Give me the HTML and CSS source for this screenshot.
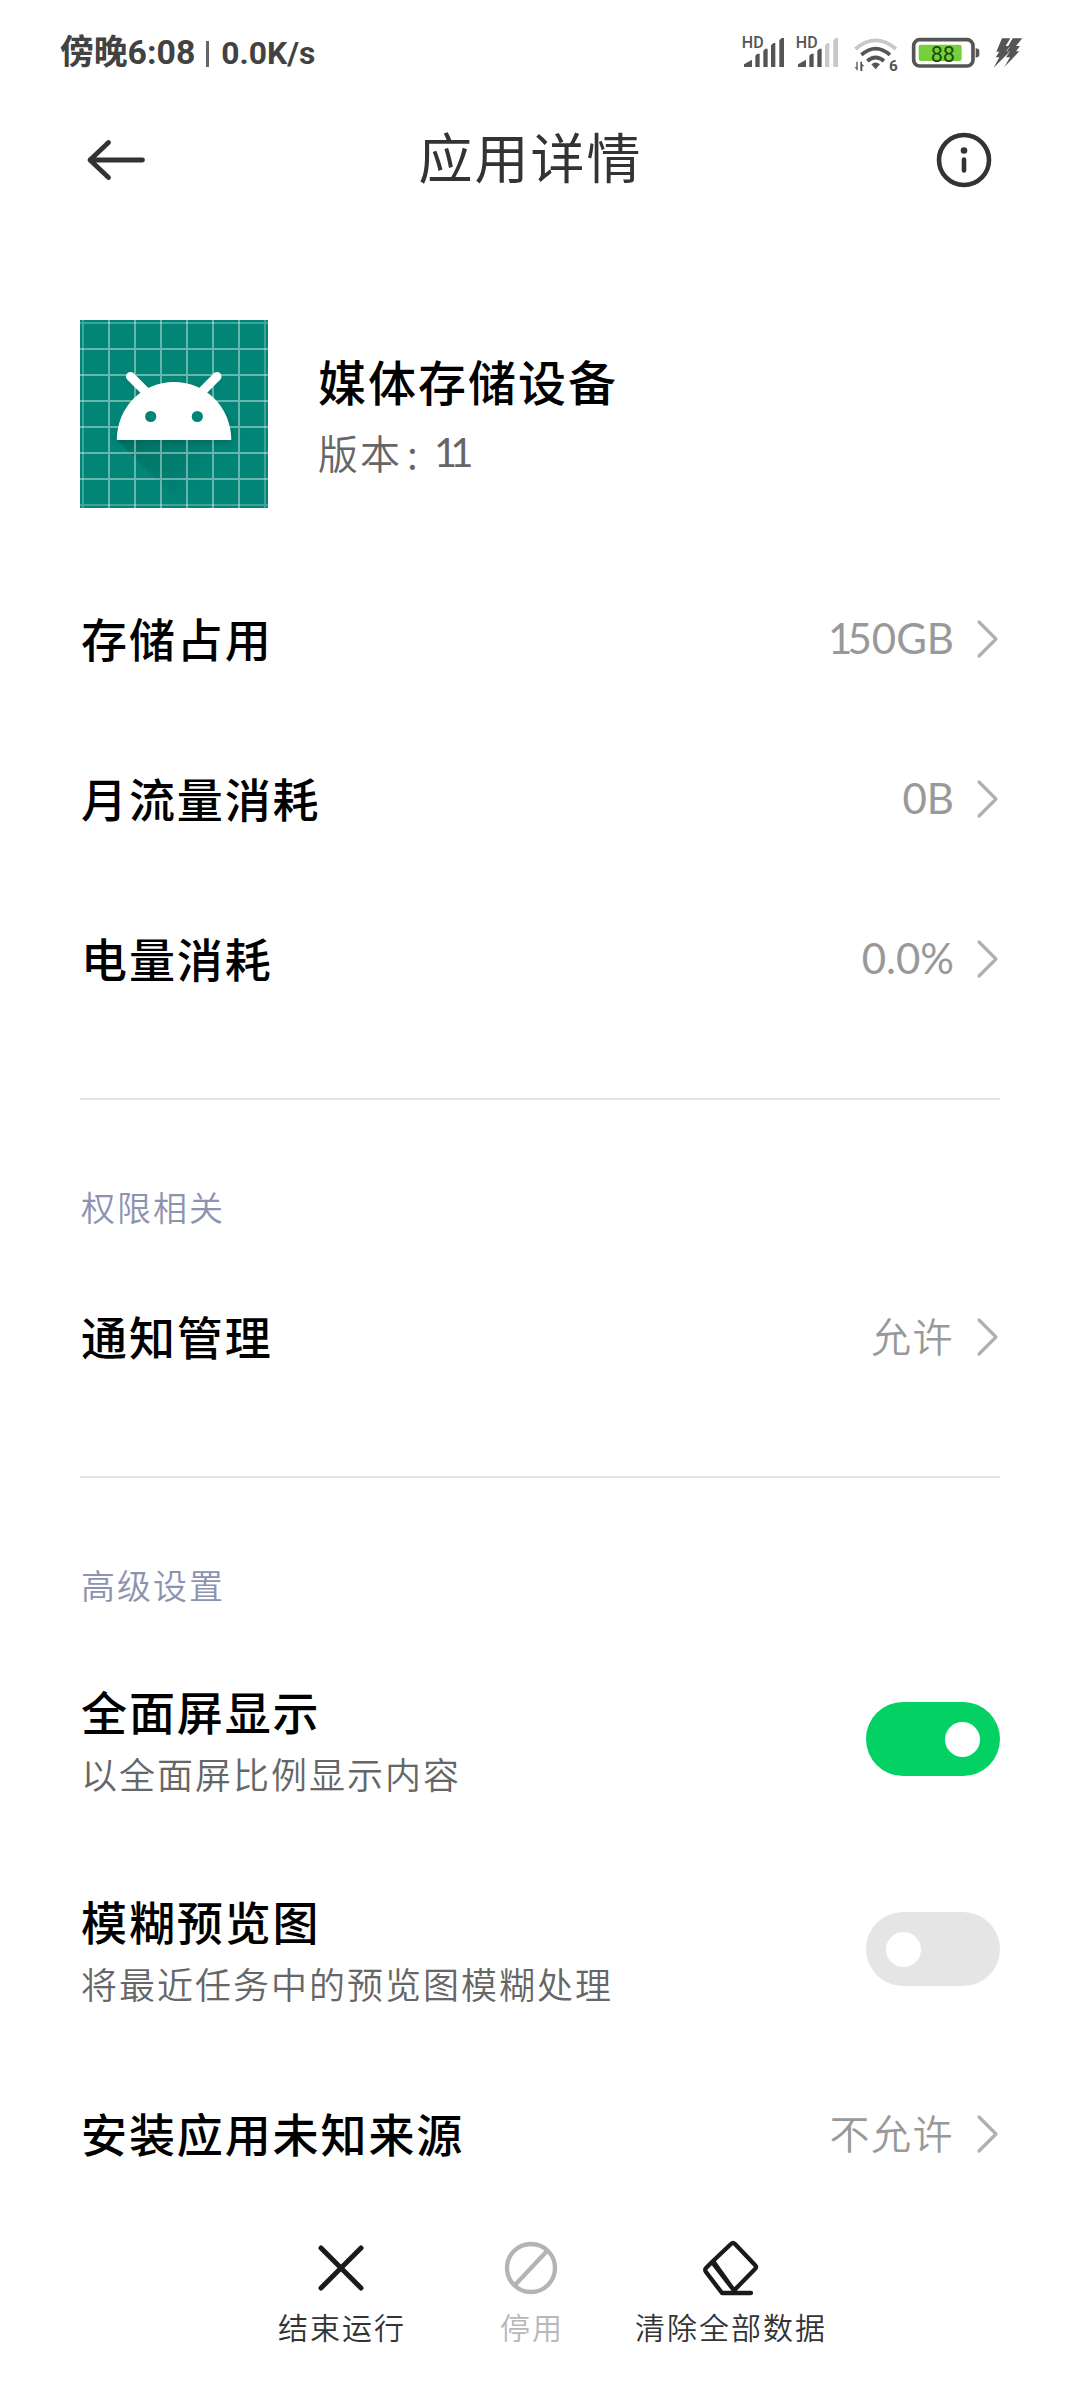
FILE: index.html
```html
<!DOCTYPE html>
<html lang="zh-CN">
<head>
<meta charset="utf-8">
<title>应用详情</title>
<link rel="stylesheet" href="styles.css">
</head>
<body>
<div class="screen">
  <div class="status">
    <div class="status-text"><span class="clock">傍晚6:08</span><span class="bar"></span><span class="speed">0.0K/s</span></div>
    <div class="status-icons">
      <svg class="signal" viewBox="66 42 128 100">
        <text x="65" y="81" class="hd">HD</text>
        <path d="M72 138v-8l24-14v22zM106 138v-34l6-6h7v40zM130 138V89l6-6h7v55zM153 138V73l7-7h6v72zM178 138V58l7-7h7v87z"/>
      </svg>
      <svg class="signal" viewBox="66 42 128 100">
        <text x="65" y="81" class="hd">HD</text>
        <path d="M72 138v-8l24-14v22zM106 138v-34l6-6h7v40zM130 138V89l6-6h7v55z"/>
        <path class="dim" d="M153 138V73l7-7h6v72zM178 138V58l7-7h7v87z"/>
      </svg>
      <svg class="wifi" viewBox="400 42 140 124">
        <path class="arc dim-arc" d="M404 84q61-52 122 0"/>
        <path class="arc" d="M422 102q43-38 86 0M440 120q25-21 50 0"/>
        <path d="M452 130q13-11 26 0l-13 15z"/>
        <path d="M411 122v28l-9-11h5v-17zM419 150v-28l5 0v6l7 8h-6v14z"/>
        <text x="505" y="150" class="gen">6</text>
      </svg>
      <svg class="battery" viewBox="574 42 208 104">
        <rect class="shell" x="582" y="56" width="178" height="79" rx="18"/>
        <rect class="charge" x="597" y="71" width="129" height="49" rx="7"/>
        <path d="M768 82q11 1 11 8v12q0 7-11 8z"/>
        <text x="633" y="122" class="pct">88</text>
      </svg>
      <svg class="bolt" viewBox="818 42 90 104">
        <path d="M845 52h25l-14 23h13l-11 16h11l-49 49 17-31h-11l11-17h-9z"/>
        <path d="M877 52h29l-19 23h12l-12 16h10l-45 47 17-29h-12l12-18h-9l8-13h-6z"/>
      </svg>
    </div>
  </div>

  <header class="appbar">
    <svg class="back" viewBox="0 0 60 44"><path d="M56.500 22H4M22.500 4.500L4 22l18.500 17.500"/></svg>
    <h1>应用详情</h1>
    <svg class="info" viewBox="0 0 56 56"><circle cx="28" cy="28" r="25"/><circle class="dot" cx="28" cy="18.500" r="3.300"/><path d="M28 27.500v11"/></svg>
  </header>

  <section class="app">
    <svg class="app-icon" viewBox="0 0 188 188">
      <defs>
        <linearGradient id="cast" x1="60" y1="110" x2="120" y2="170" gradientUnits="userSpaceOnUse">
          <stop offset="0" stop-color="#003d34" stop-opacity=".25"/>
          <stop offset="1" stop-color="#003d34" stop-opacity="0"/>
        </linearGradient>
        <filter id="soft" x="-20%" y="-20%" width="140%" height="140%"><feGaussianBlur stdDeviation="3"/></filter>
      </defs>
      <rect width="188" height="188" fill="#008577"/>
      <path class="cast" d="M37 120L105 188h83v-54L137 84z"/>
      <path class="shade" d="M38 122a57 57 0 0 1 112 0zM48 58l14 16 6-4zM139 58l-14 16-6-4z"/>
      <path class="grid" d="M29 0v188M55 0v188M81 0v188M107 0v188M133 0v188M159 0v188M0 29h188M0 55h188M0 81h188M0 107h188M0 133h188M0 159h188"/>
      <path class="grid edge" d="M3 0v188M185 0v188M0 3h188M0 185h188"/>
      <path class="antenna" d="M50.500 56.500L66 72M137 56.500L121.500 72"/>
      <path class="head" d="M36.800 120C37 87 62 62 94 62s57 25 57.300 58z"/>
      <circle class="eye" cx="70.700" cy="96.500" r="5.600"/><circle class="eye" cx="117.300" cy="96.500" r="5.600"/>
    </svg>
    <div class="app-text">
      <div class="app-name">媒体存储设备</div>
      <div class="app-version"><span>版本</span><span class="colon">:</span><span class="num">11</span></div>
    </div>
  </section>

  <section class="group usage">
    <div class="row"><span class="label">存储占用</span><span class="value num"><span class="one">1</span>50GB</span><svg class="chevron" viewBox="0 0 24 40"><path d="M3 3l17 17L3 37"/></svg></div>
    <div class="row"><span class="label">月流量消耗</span><span class="value num">0B</span><svg class="chevron" viewBox="0 0 24 40"><path d="M3 3l17 17L3 37"/></svg></div>
    <div class="row"><span class="label">电量消耗</span><span class="value num">0.0%</span><svg class="chevron" viewBox="0 0 24 40"><path d="M3 3l17 17L3 37"/></svg></div>
  </section>

  <section class="group perms">
    <h2>权限相关</h2>
    <div class="row"><span class="label">通知管理</span><span class="value">允许</span><svg class="chevron" viewBox="0 0 24 40"><path d="M3 3l17 17L3 37"/></svg></div>
  </section>

  <section class="group advanced">
    <h2>高级设置</h2>
    <div class="row tall">
      <div class="stack"><span class="label">全面屏显示</span><span class="sub">以全面屏比例显示内容</span></div>
      <div class="toggle on"><span class="knob"></span></div>
    </div>
    <div class="row tall">
      <div class="stack"><span class="label">模糊预览图</span><span class="sub">将最近任务中的预览图模糊处理</span></div>
      <div class="toggle"><span class="knob"></span></div>
    </div>
    <div class="row"><span class="label">安装应用未知来源</span><span class="value">不允许</span><svg class="chevron" viewBox="0 0 24 40"><path d="M3 3l17 17L3 37"/></svg></div>
  </section>

  <footer class="actions">
    <div class="action"><svg viewBox="0 0 60 60"><path d="M10 10l40 40M50 10L10 50"/></svg><span>结束运行</span></div>
    <div class="action disabled"><svg viewBox="0 0 60 60"><circle cx="30" cy="30" r="24"/><path class="slash" d="M14 47L46 13"/></svg><span>停用</span></div>
    <div class="action clear"><svg viewBox="0 0 60 60"><path class="thin" d="M31 6q2-2 4 0l20 21q2 2 0 4L34 52.500 13 23zM12 24L34 52.500M12 24l-6 6q-1.500 1.500 0 4l16 21h29"/></svg><span>清除全部数据</span></div>
  </footer>
</div>
</body>
</html>
```
FILE: styles.css
```css
* { box-sizing: border-box; }
body {
  margin: 0;
  background: #fff;
  color: #000;
  font-family: "Noto Sans CJK SC", sans-serif;
}
svg { display: block; flex: none; }
h1, h2 { margin: 0; }
.screen {
  width: 1080px;
  height: 2400px;
  display: flex;
  flex-direction: column;
  overflow: hidden;
}

.status {
  height: 104px;
  padding: 0 57px 0 60px;
  display: flex;
  align-items: center;
  justify-content: space-between;
  color: #424242;
  font-family: Roboto, "Noto Sans CJK SC", sans-serif;
}
.status-text { display: flex; align-items: center; font-size: 33.800px; font-weight: 700; line-height: 40px; }
.clock { padding-top: 1px; }
.bar { width: 3px; height: 26px; margin: 4px 12px 0 11px; background: #666; }
.speed { font-size: 31.800px; padding-top: 2px; }
.status-icons { display: flex; align-items: center; fill: #555; }
.signal { width: 42.670px; height: 33.330px; margin-right: 11.330px; }
.wifi { width: 46.670px; height: 41.330px; margin: 8px 10.330px 0 3.330px; }
.battery { width: 69.330px; height: 34.670px; margin-right: 13px; }
.bolt { width: 30px; height: 34.670px; }
.hd { font: 500 48px Roboto, sans-serif; letter-spacing: 1px; }
.gen { font: 700 46px Roboto, sans-serif; }
.pct { font: 400 65px Roboto, sans-serif; fill: #1d4a08; }
.dim { fill: #c8c8c8; }
.arc { fill: none; stroke: #555; stroke-width: 11; }
.dim-arc { stroke: #c8c8c8; }
.shell { fill: none; stroke: #555; stroke-width: 11; }
.charge { fill: #76d03c; }

.appbar {
  height: 112px;
  padding: 0 88px 0 86px;
  display: flex;
  align-items: center;
  justify-content: space-between;
  color: #333;
}
.appbar h1 { margin-right: 21px; padding-bottom: 9px; font-size: 54px; font-weight: 400; line-height: 80px; letter-spacing: 2px; }
.back { width: 60px; height: 44px; fill: none; stroke: #333; stroke-width: 4.800; stroke-linecap: round; stroke-linejoin: round; }
.info { width: 56px; height: 56px; fill: none; stroke: #333; stroke-width: 4.600; stroke-linecap: round; }
.info .dot { fill: #333; stroke: none; }

.app { margin-top: 104px; padding: 0 80px; display: flex; align-items: center; gap: 50px; }
.app-icon { width: 188px; height: 188px; }
.cast { fill: url(#cast); }
.grid { stroke: #fff; stroke-opacity: .4; stroke-width: 2; fill: none; }
.edge { stroke-opacity: .25; }
.shade { fill: #003d34; opacity: .35; filter: url(#soft); }
.antenna { stroke: #fff; stroke-width: 9; stroke-linecap: round; fill: none; }
.head { fill: #fff; }
.eye { fill: #008577; }
.app-text { display: flex; flex-direction: column; padding-top: 4px; }
.app-name { font-size: 48px; font-weight: 500; line-height: 71px; letter-spacing: 2px; }
.app-version { display: flex; font-size: 40px; font-weight: 350; line-height: 72px; letter-spacing: 2px; color: #666; }
.colon { width: 32px; padding-left: 5px; }

.group { margin: 0 80px; }
.usage { margin-top: 51px; border-bottom: 2px solid #e4e4e4; height: 541px; }
.perms { height: 378px; padding-top: 62px; border-bottom: 2px solid #e4e4e4; }
.advanced { padding-top: 62px; }
h2 { padding-left: 1px; font-size: 34px; font-weight: 350; line-height: 90px; letter-spacing: 2px; color: #8c93b0; }
.row { height: 160px; padding-left: 1px; display: flex; align-items: center; }
.perms .row { margin-top: 5px; }
.advanced h2 { margin-bottom: 4px; }
.label { padding-bottom: 5px; font-size: 46px; font-weight: 500; line-height: 66px; letter-spacing: 1.900px; }
.value { margin-left: auto; padding-bottom: 4px; font-size: 40px; font-weight: 350; line-height: 60px; letter-spacing: 1.500px; color: #999; }
.num { font-family: Lato, "Noto Sans CJK SC", sans-serif; font-size: 42px; font-weight: 400; letter-spacing: 0; }
.value.num { padding-bottom: 2px; }
.one { letter-spacing: -5px; }
.app-version .num { font-size: 40px; letter-spacing: -7px; }
.chevron { width: 24px; height: 40px; margin-left: 22px; fill: none; stroke: #b0b0b0; stroke-width: 3.200; stroke-linecap: round; stroke-linejoin: round; }
.tall { height: 210px; justify-content: space-between; }
.stack { display: flex; flex-direction: column; }
.stack .label { padding-bottom: 1px; margin-top: -1px; }
.sub { margin-top: 1px; font-size: 36px; font-weight: 350; line-height: 56px; letter-spacing: 2px; color: #666; }
.toggle { width: 134px; height: 74px; padding: 0 20px; border-radius: 37px; background: #e5e5e5; display: flex; align-items: center; }
.toggle.on { background: #04d163; justify-content: flex-end; }
.knob { width: 35px; height: 35px; border-radius: 50%; background: #fff; }

.actions { margin-top: auto; height: 178px; padding: 16px 0 0 278px; display: flex; gap: 94px; }
.action { display: flex; flex-direction: column; align-items: center; font-size: 30px; line-height: 44px; letter-spacing: 2px; font-weight: 350; color: #333; }
.action svg { width: 60px; height: 60px; margin-right: 3px; fill: none; stroke: #1a1a1a; stroke-width: 5; stroke-linecap: round; stroke-linejoin: round; }
.action .thin { stroke-width: 4.300; }
.action span { margin-top: 6px; }
.clear { margin-left: -23px; }
.disabled { color: #b8b8b8; }
.disabled svg { stroke: #b4b4b4; stroke-width: 4.300; }
```
